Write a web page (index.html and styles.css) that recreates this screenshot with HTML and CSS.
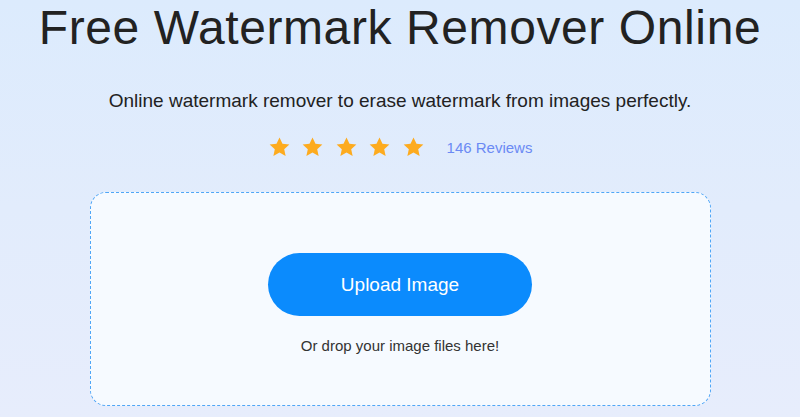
FILE: index.html
```html
<!DOCTYPE html>
<html>
<head>
<meta charset="utf-8">
<link rel="stylesheet" href="styles.css">
</head>
<body>
<main class="hero">
  <h1 class="title">Free Watermark Remover Online</h1>
  <p class="subtitle">Online watermark remover to erase watermark from images perfectly.</p>
  <div class="rating">
    <div class="stars">
      <svg class="star" viewBox="0 0 24 24"><path d="M12 1.5l3.1 6.6 7.2.8-5.4 4.9 1.5 7.1L12 17.3l-6.4 3.6 1.5-7.1L1.7 8.9l7.2-.8z"/></svg>
      <svg class="star" viewBox="0 0 24 24"><path d="M12 1.5l3.1 6.6 7.2.8-5.4 4.9 1.5 7.1L12 17.3l-6.4 3.6 1.5-7.1L1.7 8.9l7.2-.8z"/></svg>
      <svg class="star" viewBox="0 0 24 24"><path d="M12 1.5l3.1 6.6 7.2.8-5.4 4.9 1.5 7.1L12 17.3l-6.4 3.6 1.5-7.1L1.7 8.9l7.2-.8z"/></svg>
      <svg class="star" viewBox="0 0 24 24"><path d="M12 1.5l3.1 6.6 7.2.8-5.4 4.9 1.5 7.1L12 17.3l-6.4 3.6 1.5-7.1L1.7 8.9l7.2-.8z"/></svg>
      <svg class="star" viewBox="0 0 24 24"><path d="M12 1.5l3.1 6.6 7.2.8-5.4 4.9 1.5 7.1L12 17.3l-6.4 3.6 1.5-7.1L1.7 8.9l7.2-.8z"/></svg>
    </div>
    <a class="reviews" href="#">146 Reviews</a>
  </div>
  <section class="dropzone">
    <button class="upload">Upload Image</button>
    <p class="hint">Or drop your image files here!</p>
  </section>
</main>
</body>
</html>
```
FILE: styles.css
```css
html, body {
  margin: 0;
  padding: 0;
  height: 100%;
}
body {
  background: linear-gradient(180deg, #dcebfd 0%, #e2ecfc 50%, #e7edfc 100%);
  font-family: "Liberation Sans", Arial, sans-serif;
  overflow: hidden;
}
.hero {
  display: flex;
  flex-direction: column;
  align-items: center;
}
.title {
  margin: 0;
  font-size: 48px;
  font-weight: 400;
  line-height: 56px;
  color: #222;
  letter-spacing: 0.6px;
}
.subtitle {
  margin: 35px 0 0;
  font-size: 19px;
  line-height: 20px;
  color: #222;
}
.rating {
  display: flex;
  align-items: center;
  margin-top: 23px;
  height: 26px;
}
.stars {
  display: flex;
  gap: 10.5px;
  margin-right: 22px;
}
.star {
  width: 23px;
  height: 23px;
  fill: #fdab1f;
}
.reviews {
  font-size: 15px;
  color: #6b8af4;
  text-decoration: none;
}
.dropzone {
  margin-top: 32px;
  width: 621px;
  height: 214px;
  box-sizing: border-box;
  border: 1px dashed #4fa6f7;
  border-radius: 16px;
  background: #f6faff;
  display: flex;
  flex-direction: column;
  align-items: center;
}
.upload {
  margin-top: 60px;
  width: 264px;
  height: 63px;
  border: none;
  border-radius: 32px;
  background: #0b8bfd;
  color: #fff;
  font-family: "Liberation Sans", Arial, sans-serif;
  font-size: 19px;
}
.hint {
  margin: 21px 0 0;
  font-size: 15px;
  color: #333;
}
```
